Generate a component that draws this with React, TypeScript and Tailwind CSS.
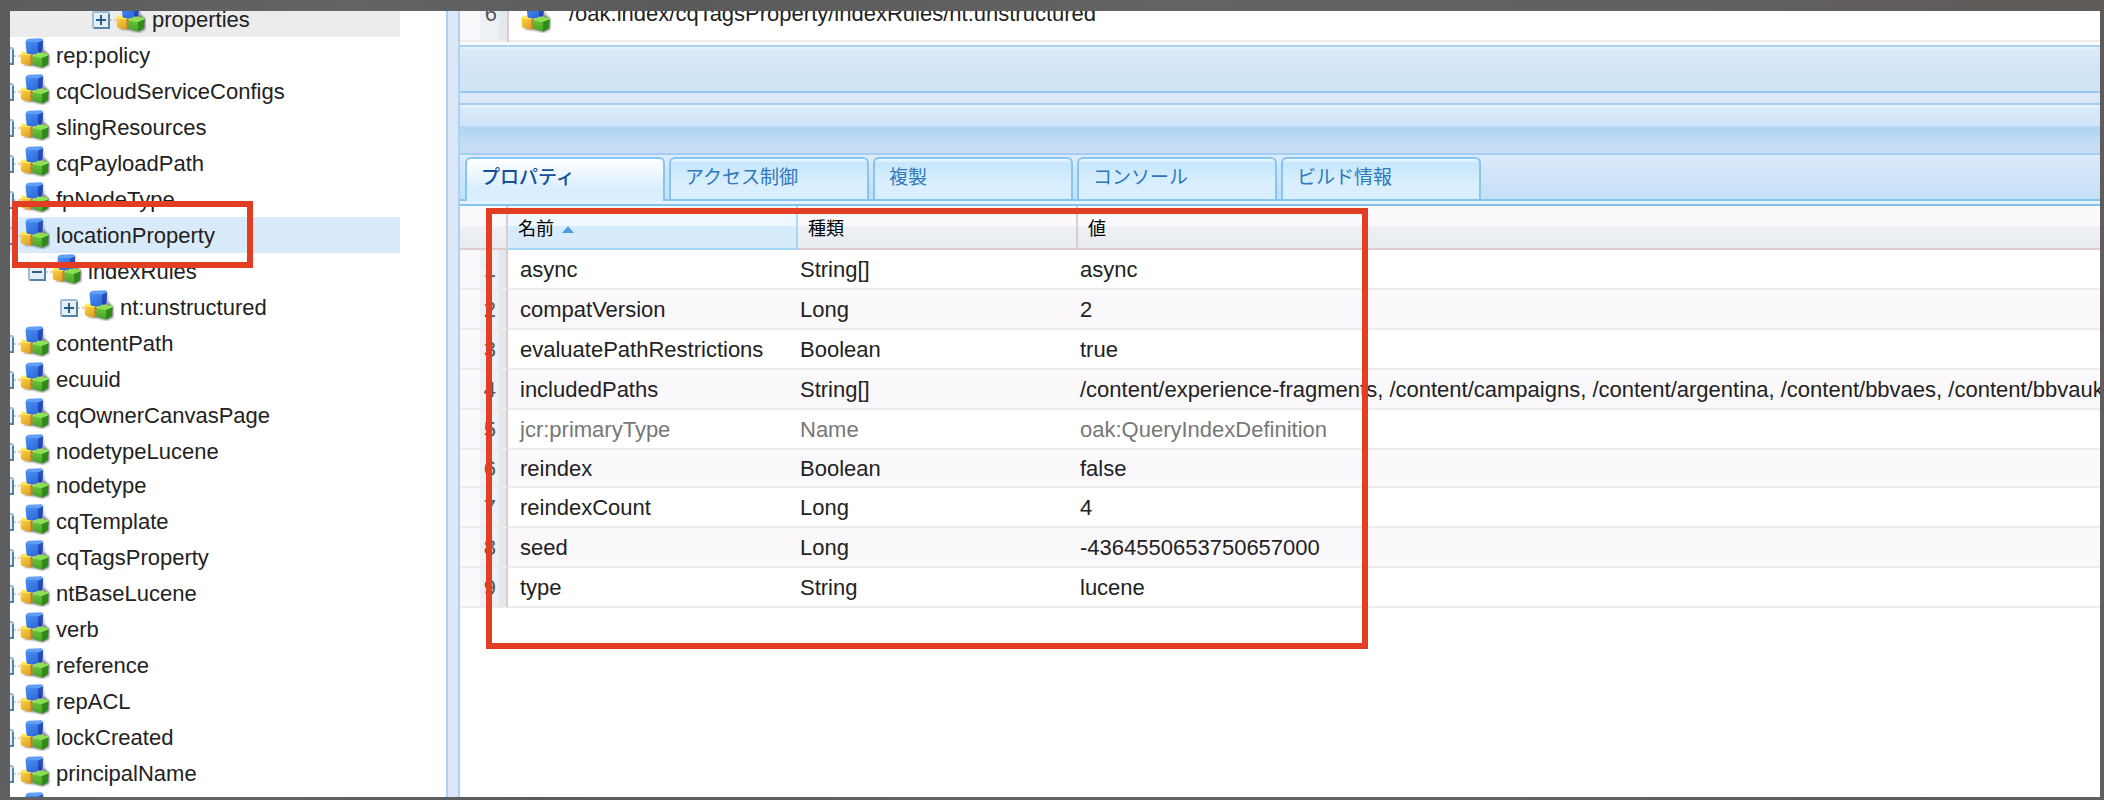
import React, { useState } from "react";

type TreeNode = {
  label: string;
  depth: number;
  open?: boolean;
  hovered?: boolean;
  selected?: boolean;
  compact?: boolean;
};

type Property = { name: string; type: string; value: string; readOnly?: boolean; compact?: boolean };

const nodes: TreeNode[] = [
  { label: "properties", depth: 3, hovered: true },
  { label: "rep:policy", depth: 0 },
  { label: "cqCloudServiceConfigs", depth: 0 },
  { label: "slingResources", depth: 0 },
  { label: "cqPayloadPath", depth: 0 },
  { label: "fpNodeType", depth: 0 },
  { label: "locationProperty", depth: 0, selected: true, open: true },
  { label: "indexRules", depth: 1, open: true },
  { label: "nt:unstructured", depth: 2 },
  { label: "contentPath", depth: 0 },
  { label: "ecuuid", depth: 0 },
  { label: "cqOwnerCanvasPage", depth: 0 },
  { label: "nodetypeLucene", depth: 0, compact: true },
  { label: "nodetype", depth: 0 },
  { label: "cqTemplate", depth: 0 },
  { label: "cqTagsProperty", depth: 0 },
  { label: "ntBaseLucene", depth: 0 },
  { label: "verb", depth: 0 },
  { label: "reference", depth: 0 },
  { label: "repACL", depth: 0 },
  { label: "lockCreated", depth: 0 },
  { label: "principalName", depth: 0 },
  { label: "", depth: 0 },
];

const indents = ["pl-0", "pl-8", "pl-16", "pl-24"];

const tabs = ["プロパティ", "アクセス制御", "複製", "コンソール", "ビルド情報"];

const properties: Property[] = [
  { name: "async", type: "String[]", value: "async" },
  { name: "compatVersion", type: "Long", value: "2" },
  { name: "evaluatePathRestrictions", type: "Boolean", value: "true" },
  {
    name: "includedPaths",
    type: "String[]",
    value:
      "/content/experience-fragments, /content/campaigns, /content/argentina, /content/bbvaes, /content/bbvauk",
  },
  { name: "jcr:primaryType", type: "Name", value: "oak:QueryIndexDefinition", readOnly: true },
  { name: "reindex", type: "Boolean", value: "false", compact: true },
  { name: "reindexCount", type: "Long", value: "4" },
  { name: "seed", type: "Long", value: "-4364550653750657000" },
  { name: "type", type: "String", value: "lucene" },
];

function IconDefs() {
  return (
    <svg width="0" height="0" className="absolute" aria-hidden="true">
      <defs>
        <linearGradient id="blueFront" x1="0" y1="0" x2="0.6" y2="1">
          <stop offset="0" stopColor="#4a92f4" />
          <stop offset="1" stopColor="#2f6bdb" />
        </linearGradient>
        <linearGradient id="blueSide" x1="0" y1="0" x2="0" y2="1">
          <stop offset="0" stopColor="#2a57c6" />
          <stop offset="1" stopColor="#1d3da8" />
        </linearGradient>
        <linearGradient id="yellowFront" x1="0" y1="0" x2="0.6" y2="1">
          <stop offset="0" stopColor="#fbd83e" />
          <stop offset="1" stopColor="#e2a22c" />
        </linearGradient>
        <linearGradient id="greenFront" x1="0" y1="0" x2="0" y2="1">
          <stop offset="0" stopColor="#66c63c" />
          <stop offset="1" stopColor="#46a626" />
        </linearGradient>
        <filter id="cubeShadow" x="-20%" y="-20%" width="150%" height="150%">
          <feGaussianBlur stdDeviation="1.2" />
        </filter>
      </defs>
    </svg>
  );
}

function Cubes() {
  return (
    <svg width="30" height="32" viewBox="0 0 30 32" className="shrink-0" aria-hidden="true">
      <path d="M3 28 L13 29 L23 31.5 L29.500 28 V18 L24 13 V5 L22 16 Z" fill="#000" opacity=".5" filter="url(#cubeShadow)" />
      <path d="M9 18 L12.800 16 V26 L10.500 29 L9.500 29 Z" fill="#bd8323" />
      <path d="M0.500 17.500 Q0.500 16.300 2 16.300 L9 17.500 Q10.300 18 10.400 19.500 L10.500 29 L2 26.800 Q0.900 26.300 0.800 25 Z" fill="url(#yellowFront)" />
      <path d="M0.600 17.200 Q1 15 3 14.500 L11 15 L12.800 16.200 L10 18.600 Z" fill="#fee95c" />
      <path d="M16.500 5 L23.300 3 L22.600 14 Q22.400 15 21.300 15.600 L17.500 17.800 Z" fill="url(#blueSide)" />
      <path d="M5.500 5 Q5.500 3.800 7 3.900 L16.500 4.600 Q18 5 18 6.500 L17.700 17.800 L8 16.900 Q6.600 16.600 6.500 15.300 Z" fill="url(#blueFront)" />
      <path d="M5.600 4.300 Q6 2.300 8.500 1.700 L20.800 1.300 Q22.800 1.500 23.200 3.300 L17.500 5.400 Z" fill="#5f9ff5" />
      <path d="M20.500 21 L28.600 18 L27.800 26.500 Q27.600 27.600 26.600 28.200 L22 30.600 Z" fill="#2f8a1b" />
      <path d="M12.400 19.500 Q12.500 18.500 14 18.800 L20.300 20.300 Q21.800 20.800 21.900 22.300 L22 30.600 L14.200 28.300 Q12.900 27.800 12.800 26.500 Z" fill="url(#greenFront)" />
      <path d="M12.500 19.300 L16.800 16.200 L18.500 15.600 L27 16.400 Q28.500 16.700 28.600 18.200 L21.300 21.200 Z" fill="#8ce052" />
    </svg>
  );
}

function Toggle({ open, label }: { open?: boolean; label: string }) {
  return (
    <button type="button" aria-label={label || "node"} aria-expanded={!!open} className="mt-2.5 h-[18px] w-[18px] shrink-0">
      <svg width="18" height="18" viewBox="0 0 18 18" aria-hidden="true">
        <rect x="1" y="1" width="16" height="16" rx="1.500" fill="#e4eef6" stroke="#9dbbd2" strokeWidth="2" />
        <path d="M2 17 H17 V3" fill="none" stroke="#5584a9" strokeWidth="2" />
        <path d="M4 9 H14" stroke="#2f5e85" strokeWidth="2" />
        {!open && <path d="M9 4 V14" stroke="#2f5e85" strokeWidth="2" />}
      </svg>
    </button>
  );
}

function TreeRow({ node }: { node: TreeNode }) {
  const tone = node.selected ? "bg-[#d9ebfb]" : node.hovered ? "bg-[#ececec]" : "";
  return (
    <li className={`mr-[46px] ${node.compact ? "h-[34px]" : "h-9"} ${tone}`}>
      <div className={`-ml-3.5 flex items-start ${indents[node.depth]}`}>
        <Toggle open={node.open} label={node.label} />
        <span className="mt-[18px] w-1.5 shrink-0 border-t-2 border-dotted border-[#dccaca]" />
        <Cubes />
        <span className="pt-px pl-1.5 whitespace-nowrap">{node.label}</span>
      </div>
    </li>
  );
}

const numberCell =
  "border-r-2 border-r-[#dccccc] bg-[linear-gradient(90deg,#faf8fa_0,#faf8fa_20px,#edf1f5_20px,#edf1f5_38px,#e3e8ee_40px)] pr-2.5 text-right text-[#555]";
const headCell =
  "h-11 border-r-2 border-b-2 border-[#dccccc] last:border-r-0 bg-[linear-gradient(#fbf9fb_0,#fbf9fb_20px,#edf1f5_20px,#e8ebf0_100%)] pt-1 pl-2.5 text-left align-middle text-lg font-normal text-black";

export default function App() {
  const [active, setActive] = useState(0);
  return (
    <div className="h-screen overflow-hidden bg-[linear-gradient(100deg,#5c5c5c_0%,#646464_16%,#5b5a5a_30%,#646464_52%,#626060_78%,#5f5957_92%,#606060_100%)] pt-[11px] pr-1 pb-[3px] pl-2.5 font-['Liberation_Sans','Noto_Sans_CJK_JP',sans-serif] text-[22px] leading-9 text-[#222]">
      <IconDefs />
      <div className="flex h-full overflow-hidden bg-white">
        <nav className="relative w-[436px] shrink-0 overflow-hidden">
          <ul className="-mt-2.5">
            {nodes.map((node, i) => (
              <TreeRow key={i} node={node} />
            ))}
          </ul>
          <div className="pointer-events-none absolute top-[190px] left-0.5 h-[67px] w-[241px] border-[6px] border-[#e33e24]" />
        </nav>

        <div className="w-3.5 shrink-0 border-x-2 border-[#abd3f4] bg-[#dce8f7]" />

        <main className="flex min-w-0 flex-1 flex-col">
          <section>
            <div className="h-[34px] overflow-hidden">
              <table className="-mt-2.5 w-full table-fixed border-collapse leading-[26px]">
                <tbody>
                  <tr className="h-10 border-b-2 border-[#efebeb] align-top">
                    <td className={`w-12 ${numberCell}`}>6</td>
                    <td className="pl-3">
                      <div className="flex h-9 items-start gap-[18px] whitespace-nowrap">
                        <Cubes />
                        /oak:index/cqTagsProperty/indexRules/nt:unstructured
                      </div>
                    </td>
                  </tr>
                </tbody>
              </table>
            </div>
            <div className="h-12 border-y-2 border-t-[#a9d1f1] border-b-[#98c6ec] bg-[linear-gradient(#ebf4fb_0,#dbeaf8_3px,#d6e8f7_16px,#d2e5f4_19px,#d1e4f3_100%)]" />
          </section>
          <div className="h-2.5 shrink-0 bg-[#dce8f7]" />
          <section className="relative flex-1">
            <div className="h-[52px] border-y-2 border-[#a3cdf1] bg-[linear-gradient(#eef6fd_0,#daebfa_3px,#cfe3f7_21px,#b0d3f3_22px,#bddcf2_34px,#c8def6_100%)]" />
            <div
              role="tablist"
              className="flex h-[46px] gap-1 border-b-2 border-[#87c5f0] bg-[linear-gradient(#dceafa,#cfe4f9_55%,#c2e0f6)] pt-0.5 pl-[5px]"
            >
              {tabs.map((tab, i) => (
                <button
                  key={tab}
                  type="button"
                  role="tab"
                  aria-selected={active === i}
                  onClick={() => setActive(i)}
                  className={`w-[200px] rounded-t-[6px] border-2 border-b-0 border-[#85c6f3] pl-3.5 text-left text-[19px] ${
                    active === i
                      ? "-mb-0.5 bg-[linear-gradient(#ffffff,#d9effe_70%)] pb-1 font-medium text-[#15509a]"
                      : "bg-[linear-gradient(#f4fbff_0,#c6e6fd_4px,#d9effe_60%)] pb-0.5 text-[#2f78bb]"
                  }`}
                >
                  {tab}
                </button>
              ))}
            </div>
            <div className="h-[5px] border-b-2 border-[#83c3ee] bg-[#e4f4fe]" />
            <table className="w-full table-fixed border-separate border-spacing-0">
              <colgroup>
                <col className="w-12" />
                <col className="w-[290px]" />
                <col className="w-[280px]" />
                <col />
              </colgroup>
              <thead>
                <tr>
                  <th className={headCell} aria-label="#" />
                  <th className="h-11 border-r-2 border-b-2 border-[#a5d8f9] bg-[linear-gradient(#eff8fe_0,#eff8fe_20px,#d6ecfd_20px)] pt-1 pl-2.5 text-left align-middle text-lg font-normal text-black">
                    <span className="flex items-center gap-2">
                      名前
                      <svg width="12" height="7" viewBox="0 0 12 7" aria-hidden="true">
                        <path d="M6 0 L12 7 H0 Z" fill="#4b9fdf" />
                      </svg>
                    </span>
                  </th>
                  <th className={headCell}>種類</th>
                  <th className={headCell}>値</th>
                </tr>
              </thead>
              <tbody>
                {properties.map((p, i) => {
                  const cell = `border-b-2 border-b-[#efebeb] overflow-hidden pt-0.5 whitespace-nowrap ${
                    p.readOnly ? "text-[#777]" : ""
                  }`;
                  return (
                    <tr key={p.name} className={`${p.compact ? "h-[38px]" : "h-10"} leading-[34px] even:bg-[#faf8fa]`}>
                      <td className={`border-b-2 border-b-[#efebeb] pt-0.5 ${numberCell}`}>{i + 1}</td>
                      <td className={`${cell} pl-3`}>{p.name}</td>
                      <td className={`${cell} pl-0.5`}>{p.type}</td>
                      <td className={`${cell} pl-0.5`}>{p.value}</td>
                    </tr>
                  );
                })}
              </tbody>
            </table>
            <div className="pointer-events-none absolute top-[105px] left-[26px] h-[441px] w-[882px] border-[6px] border-[#e33e24]" />
          </section>
        </main>
      </div>
    </div>
  );
}
